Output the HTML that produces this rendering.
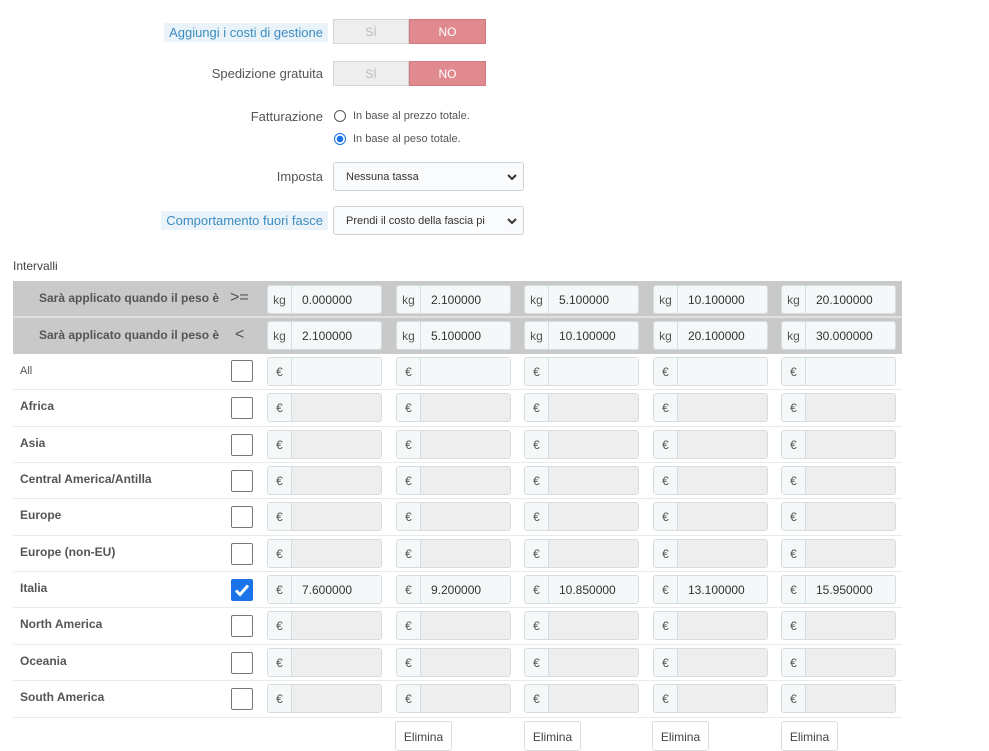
<!DOCTYPE html>
<html><head><meta charset="utf-8"><style>
*{box-sizing:border-box;margin:0;padding:0}
body{width:989px;height:750px;overflow:hidden;background:#fff;font-family:"Liberation Sans","DejaVu Sans",sans-serif;color:#555;position:relative;font-size:12px}
.a{position:absolute}
.lbl{position:absolute;right:666px;font-size:13px;color:#555;white-space:nowrap}
.hl{background:#e9f3f9;color:#3d8dc0;padding:2px 5px}
.tg{position:absolute;left:333px;width:153px;height:25px;display:flex;font-size:12px}
.tg .s{width:76px;background:#eee;border:1px solid #d6d6d6;color:#bbb;display:flex;align-items:center;justify-content:center}
.tg .n{flex:1;background:#e08a8f;border:1px solid #d27a80;color:#fff;display:flex;align-items:center;justify-content:center}
.radio{position:absolute;left:334px;width:12px;height:12px;border:1px solid #555;border-radius:50%}
.rt{position:absolute;left:353px;font-size:11px;color:#555}
.sel{position:absolute;left:333px;width:191px;height:29px;border:1px solid #ccd3d8;border-radius:3px;background:#fafbfc;font-size:11px;color:#333;padding:8px 0 0 12px;white-space:nowrap;overflow:hidden}
.sel svg{position:absolute;right:6px;top:10px}
.row{position:absolute;left:13px;width:889px;border-bottom:1px solid #eaeaea}
.hd{background:#c9c9c9;border-bottom:2px solid #e0e0e0}
.ht{position:absolute;left:26px;top:10px;font-weight:bold;font-size:12px;color:#555}
.op{position:absolute;left:217px;font-size:16px;color:#555}
.ig{position:absolute;width:115px;height:29px;border:1px solid #d6dde2;border-radius:3px;display:flex;font-size:12px;overflow:hidden}
.ig .ad{width:24px;background:#f5f8f9;border-right:1px solid #d6dde2;display:flex;align-items:center;justify-content:center;color:#555}
.ig .v{flex:1;background:#f5f8f9;padding:7px 0 0 10px;color:#333}
.dis .v{background:#eee}
.cb{position:absolute;left:218px;width:22px;height:22px;border:1px solid #777;border-radius:2px;background:#fff}
.chk{background:#1a73e8;border-color:#1a73e8}
.rl{position:absolute;left:7px;font-size:12px;font-weight:bold;color:#555}
.btn{position:absolute;top:721px;width:57px;height:30px;border:1px solid #ddd;border-radius:3px;background:#fff;font-size:12px;color:#444;padding-top:8px;text-align:center}
</style></head><body>
<div class="lbl hl" style="top:23px;right:661px">Aggiungi i costi di gestione</div>
<div class="tg" style="top:19px"><div class="s">SÌ</div><div class="n">NO</div></div>
<div class="lbl" style="top:66px">Spedizione gratuita</div>
<div class="tg" style="top:61px"><div class="s">SÌ</div><div class="n">NO</div></div>
<div class="lbl" style="top:109px">Fatturazione</div>
<div class="radio" style="top:110px"></div><div class="rt" style="top:110px">In base al prezzo totale.</div>
<div class="radio" style="top:133px;border-color:#1a73e8;background:radial-gradient(circle,#1a73e8 0 3px,#fff 3.5px)"></div><div class="rt" style="top:133px">In base al peso totale.</div>
<div class="lbl" style="top:169px">Imposta</div>
<div class="sel" style="top:162px">Nessuna tassa<svg width="10" height="8" viewBox="0 0 10 8"><path d="M1 2l4 4 4-4" stroke="#333" stroke-width="2" fill="none"/></svg></div>
<div class="lbl hl" style="top:211px;right:661px">Comportamento fuori fasce</div>
<div class="sel" style="top:206px">Prendi il costo della fascia pi<svg width="10" height="8" viewBox="0 0 10 8" style="background:#fafbfc"><path d="M1 2l4 4 4-4" stroke="#333" stroke-width="2" fill="none"/></svg></div>
<div class="a" style="left:13px;top:259px;font-size:12px;color:#444">Intervalli</div>

<div class="row hd" style="top:281px;height:37px"><div class="ht">Sarà applicato quando il peso è</div><div class="op" style="top:8px">&gt;=</div>
<div class="ig" style="left:254px;top:4px"><div class="ad">kg</div><div class="v">0.000000</div></div>
<div class="ig" style="left:383px;top:4px"><div class="ad">kg</div><div class="v">2.100000</div></div>
<div class="ig" style="left:511px;top:4px"><div class="ad">kg</div><div class="v">5.100000</div></div>
<div class="ig" style="left:640px;top:4px"><div class="ad">kg</div><div class="v">10.100000</div></div>
<div class="ig" style="left:768px;top:4px"><div class="ad">kg</div><div class="v">20.100000</div></div></div>
<div class="row hd" style="top:318px;height:36px;border-bottom:none"><div class="ht">Sarà applicato quando il peso è</div><div class="op" style="top:8px;left:222px">&lt;</div>
<div class="ig" style="left:254px;top:3px"><div class="ad">kg</div><div class="v">2.100000</div></div>
<div class="ig" style="left:383px;top:3px"><div class="ad">kg</div><div class="v">5.100000</div></div>
<div class="ig" style="left:511px;top:3px"><div class="ad">kg</div><div class="v">10.100000</div></div>
<div class="ig" style="left:640px;top:3px"><div class="ad">kg</div><div class="v">20.100000</div></div>
<div class="ig" style="left:768px;top:3px"><div class="ad">kg</div><div class="v">30.000000</div></div></div>

<div class="row" style="top:354px;height:36px"><div class="rl" style="top:11px;font-weight:normal;font-size:11px">All</div><div class="cb" style="top:6px"></div>
<div class="ig" style="left:254px;top:3px"><div class="ad">€</div><div class="v"></div></div><div class="ig" style="left:383px;top:3px"><div class="ad">€</div><div class="v"></div></div><div class="ig" style="left:511px;top:3px"><div class="ad">€</div><div class="v"></div></div><div class="ig" style="left:640px;top:3px"><div class="ad">€</div><div class="v"></div></div><div class="ig" style="left:768px;top:3px"><div class="ad">€</div><div class="v"></div></div></div>

<div class="row" style="top:390px;height:37px"><div class="rl" style="top:9px">Africa</div><div class="cb" style="top:7px"></div>
<div class="ig dis" style="left:254px;top:3px"><div class="ad">€</div><div class="v"></div></div><div class="ig dis" style="left:383px;top:3px"><div class="ad">€</div><div class="v"></div></div><div class="ig dis" style="left:511px;top:3px"><div class="ad">€</div><div class="v"></div></div><div class="ig dis" style="left:640px;top:3px"><div class="ad">€</div><div class="v"></div></div><div class="ig dis" style="left:768px;top:3px"><div class="ad">€</div><div class="v"></div></div></div>

<div class="row" style="top:427px;height:36px"><div class="rl" style="top:9px">Asia</div><div class="cb" style="top:7px"></div>
<div class="ig dis" style="left:254px;top:3px"><div class="ad">€</div><div class="v"></div></div><div class="ig dis" style="left:383px;top:3px"><div class="ad">€</div><div class="v"></div></div><div class="ig dis" style="left:511px;top:3px"><div class="ad">€</div><div class="v"></div></div><div class="ig dis" style="left:640px;top:3px"><div class="ad">€</div><div class="v"></div></div><div class="ig dis" style="left:768px;top:3px"><div class="ad">€</div><div class="v"></div></div></div>

<div class="row" style="top:463px;height:36px"><div class="rl" style="top:9px">Central America/Antilla</div><div class="cb" style="top:7px"></div>
<div class="ig dis" style="left:254px;top:3px"><div class="ad">€</div><div class="v"></div></div><div class="ig dis" style="left:383px;top:3px"><div class="ad">€</div><div class="v"></div></div><div class="ig dis" style="left:511px;top:3px"><div class="ad">€</div><div class="v"></div></div><div class="ig dis" style="left:640px;top:3px"><div class="ad">€</div><div class="v"></div></div><div class="ig dis" style="left:768px;top:3px"><div class="ad">€</div><div class="v"></div></div></div>

<div class="row" style="top:499px;height:37px"><div class="rl" style="top:9px">Europe</div><div class="cb" style="top:7px"></div>
<div class="ig dis" style="left:254px;top:3px"><div class="ad">€</div><div class="v"></div></div><div class="ig dis" style="left:383px;top:3px"><div class="ad">€</div><div class="v"></div></div><div class="ig dis" style="left:511px;top:3px"><div class="ad">€</div><div class="v"></div></div><div class="ig dis" style="left:640px;top:3px"><div class="ad">€</div><div class="v"></div></div><div class="ig dis" style="left:768px;top:3px"><div class="ad">€</div><div class="v"></div></div></div>

<div class="row" style="top:536px;height:36px"><div class="rl" style="top:9px">Europe (non-EU)</div><div class="cb" style="top:7px"></div>
<div class="ig dis" style="left:254px;top:3px"><div class="ad">€</div><div class="v"></div></div><div class="ig dis" style="left:383px;top:3px"><div class="ad">€</div><div class="v"></div></div><div class="ig dis" style="left:511px;top:3px"><div class="ad">€</div><div class="v"></div></div><div class="ig dis" style="left:640px;top:3px"><div class="ad">€</div><div class="v"></div></div><div class="ig dis" style="left:768px;top:3px"><div class="ad">€</div><div class="v"></div></div></div>

<div class="row" style="top:572px;height:36px"><div class="rl" style="top:9px">Italia</div><div class="cb chk" style="top:7px"><svg width="22" height="22" viewBox="0 0 22 22" style="position:absolute;left:-1px;top:-1px"><path d="M5 11.5l4 4 8-9" stroke="#fff" stroke-width="3" fill="none"/></svg></div>
<div class="ig" style="left:254px;top:3px"><div class="ad">€</div><div class="v">7.600000</div></div><div class="ig" style="left:383px;top:3px"><div class="ad">€</div><div class="v">9.200000</div></div><div class="ig" style="left:511px;top:3px"><div class="ad">€</div><div class="v">10.850000</div></div><div class="ig" style="left:640px;top:3px"><div class="ad">€</div><div class="v">13.100000</div></div><div class="ig" style="left:768px;top:3px"><div class="ad">€</div><div class="v">15.950000</div></div></div>

<div class="row" style="top:608px;height:37px"><div class="rl" style="top:9px">North America</div><div class="cb" style="top:7px"></div>
<div class="ig dis" style="left:254px;top:3px"><div class="ad">€</div><div class="v"></div></div><div class="ig dis" style="left:383px;top:3px"><div class="ad">€</div><div class="v"></div></div><div class="ig dis" style="left:511px;top:3px"><div class="ad">€</div><div class="v"></div></div><div class="ig dis" style="left:640px;top:3px"><div class="ad">€</div><div class="v"></div></div><div class="ig dis" style="left:768px;top:3px"><div class="ad">€</div><div class="v"></div></div></div>

<div class="row" style="top:645px;height:36px"><div class="rl" style="top:9px">Oceania</div><div class="cb" style="top:7px"></div>
<div class="ig dis" style="left:254px;top:3px"><div class="ad">€</div><div class="v"></div></div><div class="ig dis" style="left:383px;top:3px"><div class="ad">€</div><div class="v"></div></div><div class="ig dis" style="left:511px;top:3px"><div class="ad">€</div><div class="v"></div></div><div class="ig dis" style="left:640px;top:3px"><div class="ad">€</div><div class="v"></div></div><div class="ig dis" style="left:768px;top:3px"><div class="ad">€</div><div class="v"></div></div></div>

<div class="row" style="top:681px;height:37px"><div class="rl" style="top:9px">South America</div><div class="cb" style="top:7px"></div>
<div class="ig dis" style="left:254px;top:3px"><div class="ad">€</div><div class="v"></div></div><div class="ig dis" style="left:383px;top:3px"><div class="ad">€</div><div class="v"></div></div><div class="ig dis" style="left:511px;top:3px"><div class="ad">€</div><div class="v"></div></div><div class="ig dis" style="left:640px;top:3px"><div class="ad">€</div><div class="v"></div></div><div class="ig dis" style="left:768px;top:3px"><div class="ad">€</div><div class="v"></div></div></div>

<div class="btn" style="left:395px">Elimina</div>
<div class="btn" style="left:524px">Elimina</div>
<div class="btn" style="left:652px">Elimina</div>
<div class="btn" style="left:781px">Elimina</div>
</body></html>
